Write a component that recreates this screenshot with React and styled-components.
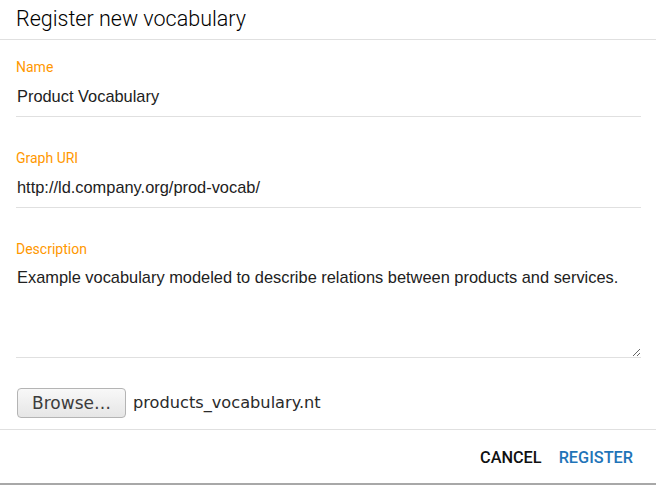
import React, { useState } from 'react';
import styled, { createGlobalStyle } from 'styled-components';

const GlobalStyle = createGlobalStyle`
  html, body {
    margin: 0;
    padding: 0;
    background: #ffffff;
  }
  body {
    font-family: Roboto, "Liberation Sans", Arial, sans-serif;
  }
`;

const Dialog = styled.div`
  width: 656px;
  height: 485px;
  display: flex;
  flex-direction: column;
  background: #fff;
  box-sizing: border-box;
  border-bottom: 2px solid #a8a8a8;
`;

const Header = styled.div`
  height: 39px;
  display: flex;
  align-items: center;
  padding: 0 16px;
  border-bottom: 1px solid #e0e0e0;
  flex-shrink: 0;
`;

const Title = styled.h2`
  margin: 0;
  font-family: Roboto, sans-serif;
  font-weight: 300;
  font-size: 21.5px;
  color: #000;
  padding-bottom: 3px;
`;

const Body = styled.div`
  flex: 1;
  display: flex;
  flex-direction: column;
  padding: 17px 15px 0 16px;
`;

const Field = styled.label`
  display: flex;
  flex-direction: column;
  margin-bottom: ${({ gap }) => gap}px;
`;

const Label = styled.span`
  font-family: Roboto, sans-serif;
  font-size: 14px;
  line-height: 20px;
  color: #ff9800;
`;

const Input = styled.input`
  height: 38px;
  box-sizing: content-box;
  border: none;
  border-bottom: 1px solid #e0e0e0;
  padding: 0 0 1px 1px;
  margin: 0;
  font-family: "Liberation Sans", Arial, sans-serif;
  font-size: 16.4px;
  color: #212121;
  outline: none;
  background: transparent;
`;

const TextArea = styled.textarea`
  height: 99px;
  box-sizing: border-box;
  border: none;
  border-bottom: 1px solid #e0e0e0;
  padding: 8px 0 0 1px;
  margin: 0;
  font-family: "Liberation Sans", Arial, sans-serif;
  font-size: 16.4px;
  line-height: 20px;
  color: #212121;
  outline: none;
  resize: vertical;
  background: transparent;
`;

const FileRow = styled.div`
  display: flex;
  align-items: center;
  gap: 7px;
  padding-left: 1px;
`;

const BrowseButton = styled.button`
  width: 109px;
  height: 30px;
  border: 1px solid #b4b4b4;
  border-radius: 4px;
  background: linear-gradient(#f8f8f8, #e6e6e6);
  font-family: "DejaVu Sans", sans-serif;
  font-size: 17px;
  color: #3c3c3c;
  padding: 0;
  cursor: pointer;
`;

const FileName = styled.span`
  font-family: "DejaVu Sans", sans-serif;
  font-size: 16.2px;
  color: #2b2b2b;
  padding-bottom: 1px;
`;

const Footer = styled.div`
  height: 52px;
  flex-shrink: 0;
  display: flex;
  justify-content: flex-end;
  align-items: center;
  gap: 1px;
  padding: 1px 15px 0 0;
  border-top: 1px solid #e0e0e0;
`;

const ActionButton = styled.button`
  border: none;
  background: transparent;
  padding: 6px 8px;
  font-family: Roboto, sans-serif;
  font-weight: 500;
  font-size: 16.3px;
  text-transform: uppercase;
  color: ${({ primary }) => (primary ? '#1f74b8' : '#111111')};
  cursor: pointer;
`;

export default function App() {
  const [name, setName] = useState('Product Vocabulary');
  const [uri, setUri] = useState('http://ld.company.org/prod-vocab/');
  const [desc, setDesc] = useState(
    'Example vocabulary modeled to describe relations between products and services.'
  );

  return (
    <>
      <GlobalStyle />
      <Dialog>
        <Header>
          <Title>Register new vocabulary</Title>
        </Header>
        <Body>
          <Field gap={31}>
            <Label>Name</Label>
            <Input value={name} onChange={(e) => setName(e.target.value)} />
          </Field>
          <Field gap={31}>
            <Label>Graph URI</Label>
            <Input value={uri} onChange={(e) => setUri(e.target.value)} />
          </Field>
          <Field gap={30}>
            <Label>Description</Label>
            <TextArea value={desc} onChange={(e) => setDesc(e.target.value)} />
          </Field>
          <FileRow>
            <BrowseButton type="button">Browse…</BrowseButton>
            <FileName>products_vocabulary.nt</FileName>
          </FileRow>
        </Body>
        <Footer>
          <ActionButton type="button">Cancel</ActionButton>
          <ActionButton type="button" primary>
            Register
          </ActionButton>
        </Footer>
      </Dialog>
    </>
  );
}
